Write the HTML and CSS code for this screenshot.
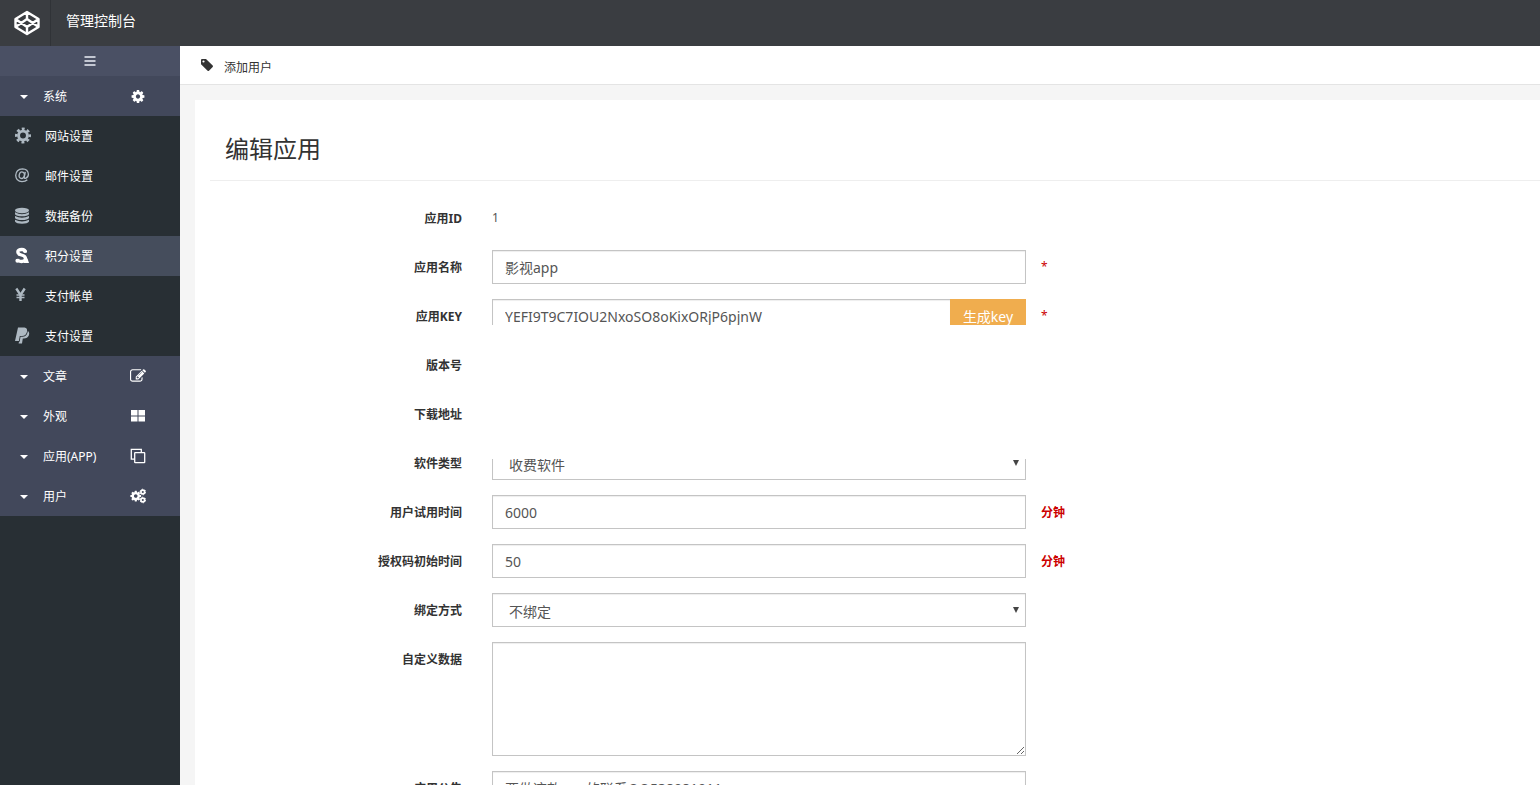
FILE: index.html
```html
<!DOCTYPE html>
<html lang="zh-CN">
<head>
<meta charset="utf-8">
<title>管理控制台</title>
<link rel="stylesheet" href="styles.css">
</head>
<body>
<svg class="defs" aria-hidden="true">
  <symbol id="cog" viewBox="0 0 1792 1792"><path fill="currentColor" d="M1152 896q0-106-75-181t-181-75-181 75-75 181 75 181 181 75 181-75 75-181zm512-109v222q0 12-8 23t-20 13l-185 28q-19 54-39 91 35 50 107 138 10 12 10 25t-9 23q-27 37-99 108t-94 71q-12 0-26-9l-138-108q-44 23-91 38-16 136-29 186-7 28-36 28h-222q-14 0-24.5-8.5t-11.5-21.5l-28-184q-49-16-90-37l-141 107q-10 9-25 9-14 0-25-11-126-114-165-168-7-10-7-23 0-12 8-23 15-21 51-66.5t54-70.5q-27-50-41-99l-183-27q-13-2-21-12.5t-8-23.5v-222q0-12 8-23t19-13l186-28q14-46 39-92-40-57-107-138-10-12-10-24 0-10 9-23 26-36 98.5-107.5t94.5-71.5q13 0 26 10l138 107q44-23 91-38 16-136 29-186 7-28 36-28h222q14 0 24.5 8.5t11.5 21.5l28 184q49 16 90 37l142-107q9-9 24-9 13 0 25 10 129 119 165 170 7 8 7 22 0 12-8 23-15 21-51 66.5t-54 70.5q26 50 41 98l183 28q13 2 21 12.5t8 23.5z"/></symbol>
</svg>
<header class="topbar">
  <a class="logo" href="#" aria-label="首页">
    <svg width="28" height="28" viewBox="0 0 28 28" fill="none" stroke="#fff" stroke-width="2.4" stroke-linejoin="round"><path d="M14 3L25.500 10V18L14 25L2.500 18V10ZM14 3V10M14 25V18M2.500 10L14 18L25.500 10M2.500 18L14 10L25.500 18"/></svg>
  </a>
  <a class="brand" href="#">管理控制台</a>
</header>
<div class="layout">
  <nav class="sidebar">
    <button class="toggle" type="button" aria-label="折叠菜单">
      <svg width="12" height="10" viewBox="0 0 12 10" fill="#c3c7d2"><path d="M0.500 0h11v2h-11zM0.500 4h11v2h-11zM0.500 8h11v2h-11z"/></svg>
    </button>
    <button class="group" type="button"><i class="caret"></i><span>系统</span><svg class="group-icon" width="16" height="15"><use href="#cog"/></svg></button>
    <ul class="items">
      <li><a href="#"><svg width="18" height="18" viewBox="0 0 18 18" fill="none" stroke="currentColor"><circle cx="9" cy="8.500" r="4.400" stroke-width="2.900"/><circle cx="9" cy="8.500" r="6.700" stroke-width="2.600" stroke-dasharray="2.900 2.362" stroke-dashoffset="1.450"/></svg><span>网站设置</span></a></li>
      <li><a href="#"><svg width="18" height="18" viewBox="0 0 18 18" fill="none" stroke="currentColor" stroke-width="1.300"><ellipse cx="7.800" cy="8.200" rx="2.600" ry="3.300" transform="rotate(15 7.800 8.200)"/><path d="M11.300 4.800L10.300 9.800Q10 11.600 11.500 11.300Q14.400 10.300 14.400 7.200Q14 2 8.500 1.800Q2 2.200 1.700 8.400Q2 14.300 8 14.600Q11.500 14.600 13.300 12.800"/></svg><span>邮件设置</span></a></li>
      <li><a href="#"><svg width="18" height="18" viewBox="0 0 18 18" fill="currentColor"><ellipse cx="8" cy="3.500" rx="7" ry="2.700"/><path d="M1 5.300Q8 9 15 5.300V7.300Q13.500 9.300 8 9.300T1 7.300ZM1 9.100Q8 12.500 15 9.100V11Q13.500 13 8 13T1 11ZM1 12.800Q8 16.200 15 12.800V14.500Q13.500 16.700 8 16.700T1 14.500Z"/></svg><span>数据备份</span></a></li>
      <li class="active"><a href="#"><svg width="18" height="18" viewBox="0 0 18 18" fill="none" stroke="currentColor"><path stroke-width="3.300" d="M11.400 5.500Q11.200 2.500 7.800 2.500Q3.800 2.500 3.800 5Q3.800 7.300 7.400 8Q11.500 9 11.500 11.700Q11.300 14.500 7.500 14.500Q4 14.500 3.500 12"/><circle cx="3.400" cy="13.700" r="2" fill="currentColor" stroke="none"/><circle cx="11" cy="4.300" r="1.800" fill="currentColor" stroke="none"/><path fill="currentColor" stroke="none" d="M10 12L13.500 11.500L15 16H10Z"/></svg><span>积分设置</span></a></li>
      <li><a href="#"><svg width="18" height="18" viewBox="0 0 18 18" fill="none" stroke="currentColor"><path stroke-width="2.400" d="M2.300 1.500L6.500 8L10.700 1.500M6.500 7.500V14"/><path stroke-width="1.500" d="M2.500 8H10.500M2.500 10.500H10.500"/></svg><span>支付帐单</span></a></li>
      <li><a href="#"><svg width="18" height="18" viewBox="0 0 18 18" fill="currentColor"><path d="M4 .5H10.500Q13.700 1 13 4.700Q12 8.900 8 8.900H5.800L4.900 14H1Z"/><path d="M13.800 4Q16 5.500 14.800 8.500Q13.500 11.500 9.800 11.500H8.800L8 16.500H4.600L5 14.700H5.600L6.500 9.700H8.800Q13.500 9.400 13.800 4Z"/></svg><span>支付设置</span></a></li>
    </ul>
    <button class="group" type="button"><i class="caret"></i><span>文章</span><svg class="group-icon" width="16" height="16" viewBox="0 0 1792 1792" fill="#fff"><path d="M888 1184l116-116-152-152-116 116v56h96v96h56zm440-720q-16-16-33 1l-350 350q-17 17-1 33t33-1l350-350q17-17 1-33zm80 594v190q0 119-84.500 203.500t-203.500 84.500h-832q-119 0-203.500-84.500t-84.500-203.500v-832q0-119 84.500-203.500t203.500-84.500h832q63 0 117 25 15 7 18 23 3 17-9 29l-49 49q-14 14-32 8-23-6-45-6h-832q-66 0-113 47t-47 113v832q0 66 47 113t113 47h832q66 0 113-47t47-113v-126q0-13 9-22l64-64q15-15 35-7t20 29zm-96-738l288 288-672 672h-288v-288zm444 132l-92 92-288-288 92-92q28-28 68-28t68 28l152 152q28 28 28 68t-28 68z"/></svg></button>
    <button class="group" type="button"><i class="caret"></i><span>外观</span><svg class="group-icon" width="16" height="14" viewBox="0 0 16 14" fill="#fff"><path d="M1 1h6.500v5.500h-6.500zM8.500 1h6.500v5.500h-6.500zM1 7.500h6.500v5h-6.500zM8.500 7.500h6.500v5h-6.500z"/></svg></button>
    <button class="group" type="button"><i class="caret"></i><span>应用(APP)</span><svg class="group-icon" width="16" height="16" viewBox="0 0 16 16" fill="none" stroke="#fff" stroke-width="1.300"><rect x="4.700" y="4.700" width="10" height="10" rx=".5"/><path d="M4.700 11.200H1.300V1.300H11.300V4.700"/></svg></button>
    <button class="group" type="button"><i class="caret"></i><span>用户</span><svg class="group-icon" width="16" height="16" viewBox="0 0 16 16"><use href="#cog" x="-0.500" y="1.800" width="12.500" height="12.500"/><circle cx="12.800" cy="4" r="1.900" fill="none" stroke="#fff" stroke-width="1.700"/><circle cx="12.800" cy="4" r="2.800" fill="none" stroke="#fff" stroke-dasharray="1.400 1.532"/><circle cx="12.800" cy="12" r="1.900" fill="none" stroke="#fff" stroke-width="1.700"/><circle cx="12.800" cy="12" r="2.800" fill="none" stroke="#fff" stroke-dasharray="1.400 1.532"/></svg></button>
  </nav>
  <main class="main">
    <div class="crumb">
      <svg width="14" height="14" viewBox="0 0 14 14"><path fill="#333" fill-rule="evenodd" d="M1 2Q1 1 2 1H6L12.700 7.500Q13.300 8.200 12.700 8.900L9 12.700Q8.300 13.300 7.600 12.700L1 6.200ZM3.500 2.400A1.100 1.100 0 1 0 3.500 4.600A1.100 1.100 0 1 0 3.500 2.400Z"/></svg>
      <span>添加用户</span>
    </div>
    <section class="panel">
      <h1>编辑应用</h1>
      <form class="form">
        <div class="row"><span class="label">应用ID</span><div class="field static">1</div></div>
        <div class="row"><label class="label" for="name">应用名称</label><div class="field"><input id="name" type="text" value="影视app"></div><span class="note required">*</span></div>
        <div class="row"><label class="label" for="key">应用KEY</label><div class="field cut-bottom"><input id="key" type="text" value="YEFI9T9C7IOU2NxoSO8oKixORjP6pjnW"><button class="generate" type="button">生成key</button></div><span class="note required">*</span></div>
        <div class="row"><span class="label">版本号</span></div>
        <div class="row"><span class="label">下载地址</span></div>
        <div class="row"><label class="label" for="type">软件类型</label><div class="field select cut-top"><select id="type"><option>收费软件</option></select></div></div>
        <div class="row"><label class="label" for="trial">用户试用时间</label><div class="field"><input id="trial" type="text" value="6000"></div><span class="note">分钟</span></div>
        <div class="row"><label class="label" for="initial">授权码初始时间</label><div class="field"><input id="initial" type="text" value="50"></div><span class="note">分钟</span></div>
        <div class="row"><label class="label" for="bind">绑定方式</label><div class="field select"><select id="bind"><option>不绑定</option></select></div></div>
        <div class="row"><label class="label" for="data">自定义数据</label><div class="field"><textarea id="data" rows="5"></textarea></div></div>
        <div class="row"><label class="label" for="notice">应用公告</label><div class="field"><input id="notice" type="text" value="要做这款app的联系QQ538081911"></div></div>
      </form>
    </section>
  </main>
</div>
</body>
</html>
```
FILE: styles.css
```css
* { box-sizing: border-box; }

body {
  margin: 0;
  height: 100vh;
  overflow: hidden;
  display: flex;
  flex-direction: column;
  font: 12px/20px "Noto Sans", "Noto Sans CJK SC", sans-serif;
  color: #333;
  background: #f5f5f5;
}

button, input, select, textarea { font: inherit; color: inherit; border-radius: 0; margin: 0; }
a { color: inherit; text-decoration: none; }
svg { flex: none; display: block; }
.defs { position: absolute; width: 0; height: 0; }

.topbar { flex: none; display: flex; height: 46px; background: #3a3d41; color: #fff; }
.logo { display: flex; align-items: center; width: 51px; padding-left: 13px; border-right: 1px solid #303337; }
.brand { padding-left: 15px; font-size: 14px; line-height: 42px; }

.layout { flex: 1; min-height: 0; display: flex; }

.sidebar { flex: none; width: 180px; background: #282f34; color: #fff; }
.sidebar span { padding-top: 2px; }
.toggle { display: flex; width: 100%; height: 30px; align-items: center; justify-content: center; border: 0; background: #4a5064; }
.group {
  display: flex;
  align-items: center;
  width: 100%;
  height: 40px;
  padding: 0 34px 0 20px;
  border: 0;
  background: #42485b;
  text-align: left;
}
.caret { border: 4px solid transparent; border-top-color: #fff; border-bottom: 0; margin: 2px 15px 0 0; }
.group-icon { margin-left: auto; color: #fff; }
.items { list-style: none; margin: 0; padding: 0; }
.items a { display: flex; align-items: center; gap: 13px; height: 40px; padding-left: 14px; }
.items svg { color: #aeb9c2; }
.items .active { background: #454d5c; }
.items .active svg { color: #fff; }

.main { flex: 1; min-width: 0; }
.crumb { display: flex; align-items: center; gap: 10px; height: 39px; padding: 5px 20px 0; background: #fff; border-bottom: 1px solid #e4e4e4; }
.crumb svg { margin-bottom: 5px; }

.panel { margin: 15px 0 0 15px; background: #fff; }
h1 { margin: 0 0 20px 15px; padding: 33px 15px 15px; border-bottom: 1px solid #eee; font-size: 24px; line-height: 32px; font-weight: 400; }

.row { display: grid; grid-template-columns: 282fr 564fr 499fr; margin-bottom: 15px; }
.label { height: 34px; padding-right: 15px; text-align: right; font-weight: 700; line-height: 36px; }
.field { position: relative; display: flex; padding: 0 15px; font-size: 14px; }
.static { font-size: 12px; line-height: 34px; color: #555; }
.note { height: 34px; color: #c00; font-weight: 700; line-height: 36px; }
.required { font-weight: 400; line-height: 34px; }

input, select, textarea {
  flex: 1;
  min-width: 0;
  height: 34px;
  padding: 6px 12px;
  border: 1px solid #c4c4c4;
  background: #fff;
  color: #555;
  box-shadow: inset 0 1px 1px #eee;
}
textarea { height: 114px; resize: vertical; }
select { appearance: none; padding: 8px 16px 4px; }
.select::after {
  content: "";
  position: absolute;
  right: 22px;
  top: 14px;
  border: 3px solid transparent;
  border-top: 6px solid #444;
  border-bottom: 0;
}
.generate { width: 76px; padding: 2px 0 0; border: 0; background: #f0ad4e; color: #fff; }
.cut-bottom { clip-path: inset(0 0 8px 0); }
.cut-bottom input { border-right: 0; }
.cut-top { clip-path: inset(13px 0 0 0); }
```
